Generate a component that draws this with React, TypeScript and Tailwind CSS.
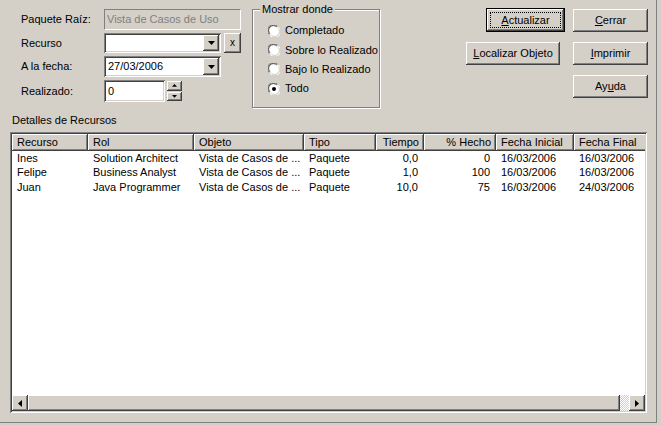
import React from 'react';

const sunken = 'shadow-[inset_1px_1px_#808080,inset_-1px_-1px_#ffffff,inset_2px_2px_#404040,inset_-2px_-2px_#d4d0c8]';
const raised = 'shadow-[inset_-1px_-1px_#404040,inset_1px_1px_#ffffff,inset_-2px_-2px_#808080,inset_2px_2px_#d4d0c8]';

function Tri({ dir, size = 7 }: { dir: 'down' | 'up' | 'left' | 'right'; size?: number }) {
  const pts: Record<string, string> = {
    down: '0,0 7,0 3.5,4',
    up: '0,4 7,4 3.5,0',
    left: '4,0 4,7 0,3.5',
    right: '0,0 0,7 4,3.5',
  };
  const vb = dir === 'down' || dir === 'up' ? '0 0 7 4' : '0 0 4 7';
  const w = dir === 'down' || dir === 'up' ? size : size * 4 / 7;
  const h = dir === 'down' || dir === 'up' ? size * 4 / 7 : size;
  return (
    <svg width={w} height={h} viewBox={vb}>
      <polygon points={pts[dir]} fill="#000" />
    </svg>
  );
}

function Radio({ checked, label }: { checked?: boolean; label: string }) {
  return (
    <div className="flex items-center h-[19.4px]">
      <svg width="12" height="12" viewBox="0 0 12 12" className="ml-[16px] mr-[5px]">
        <circle cx="6" cy="6" r="5.5" fill="#ffffff" />
        <path d="M1.2 9.5 A5.5 5.5 0 0 1 9.5 1.2" stroke="#808080" strokeWidth="1" fill="none" />
        <path d="M2 8.8 A4.5 4.5 0 0 1 8.8 2" stroke="#404040" strokeWidth="1" fill="none" />
        <path d="M10.8 2.5 A5.5 5.5 0 0 1 2.5 10.8" stroke="#ffffff" strokeWidth="1" fill="none" />
        <path d="M10 3.2 A4.5 4.5 0 0 1 3.2 10" stroke="#d4d0c8" strokeWidth="1" fill="none" />
        {checked && <circle cx="6" cy="6" r="2" fill="#000" />}
      </svg>
      <span>{label}</span>
    </div>
  );
}

function Btn({ children, w, isDefault }: { children: React.ReactNode; w: string; isDefault?: boolean }) {
  if (isDefault) {
    return (
      <div className={`${w} h-[24px] border border-black`}>
        <div className={`h-full w-full ${raised} flex items-center justify-center p-[3px]`}>
          <div className="h-full w-full border border-dotted border-black flex items-center justify-center">{children}</div>
        </div>
      </div>
    );
  }
  return <div className={`${w} h-[23px] ${raised} flex items-center justify-center`}>{children}</div>;
}

const cols = [
  { name: 'Recurso', w: 'w-[76px]', right: false },
  { name: 'Rol', w: 'w-[106px]', right: false },
  { name: 'Objeto', w: 'w-[110px]', right: false },
  { name: 'Tipo', w: 'w-[72px]', right: false },
  { name: 'Tiempo', w: 'w-[48px]', right: true },
  { name: '% Hecho', w: 'w-[72px]', right: true },
  { name: 'Fecha Inicial', w: 'w-[78px]', right: false },
  { name: 'Fecha Final', w: 'w-[80px]', right: false },
];

const rows = [
  ['Ines', 'Solution Architect', 'Vista de Casos de ...', 'Paquete', '0,0', '0', '16/03/2006', '16/03/2006'],
  ['Felipe', 'Business Analyst', 'Vista de Casos de ...', 'Paquete', '1,0', '100', '16/03/2006', '16/03/2006'],
  ['Juan', 'Java Programmer', 'Vista de Casos de ...', 'Paquete', '10,0', '75', '16/03/2006', '24/03/2006'],
];

export default function App() {
  return (
    <div className="w-[661px] h-[425px] bg-[#d4d0c8] overflow-hidden text-[11px] leading-none text-black font-['Liberation_Sans',Arial,sans-serif]">
      <div className="w-[657px] h-[423px] border-r border-b border-[#808080] flex flex-col">
        {/* top area */}
        <div className="flex pt-[9px] h-[112px]">
          {/* form */}
          <div className="pl-[21px] w-[252px] flex flex-col">
            <div className="flex items-center h-[21px]">
              <span className="w-[83px]">Paquete Raíz:</span>
              <div className="w-[137px] h-[21px] border border-[#808080] border-r-white border-b-white flex items-center px-[2px] text-[#808080]">
                Vista de Casos de Uso
              </div>
            </div>
            <div className="flex items-center h-[20px] mt-[3px]">
              <span className="w-[83px]">Recurso</span>
              <div className={`w-[117px] h-[20px] bg-white ${sunken} flex items-center justify-end p-[2px]`}>
                <div className={`w-[16px] h-full ${raised} bg-[#d4d0c8] flex items-center justify-center`}>
                  <Tri dir="down" />
                </div>
              </div>
              <div className={`ml-[3px] w-[17px] h-[20px] ${raised} flex items-center justify-center text-[10px]`}>x</div>
            </div>
            <div className="flex items-center h-[21px] mt-[3px]">
              <span className="w-[83px]">A la fecha:</span>
              <div className={`w-[117px] h-[21px] bg-white ${sunken} flex items-center p-[2px]`}>
                <span className="flex-1 pl-[2px]">27/03/2006</span>
                <div className={`w-[16px] h-full ${raised} bg-[#d4d0c8] flex items-center justify-center`}>
                  <Tri dir="down" />
                </div>
              </div>
            </div>
            <div className="flex items-center h-[22px] mt-[3px]">
              <span className="w-[83px]">Realizado:</span>
              <div className={`w-[61px] h-[22px] bg-white ${sunken} flex items-center pl-[4px]`}>0</div>
              <div className="ml-[2px] w-[15px] h-[22px] flex flex-col gap-[1px] py-[1px]">
                <div className={`flex-1 ${raised} flex items-center justify-center`}>
                  <Tri dir="up" size={5} />
                </div>
                <div className={`flex-1 ${raised} flex items-center justify-center`}>
                  <Tri dir="down" size={5} />
                </div>
              </div>
            </div>
          </div>

          {/* group box */}
          <div className="w-[128px] h-[107px] relative -mt-[8px]">
            <div className="absolute left-0 right-0 top-[8px] bottom-0 border border-[#808080] shadow-[1px_1px_#ffffff,inset_1px_1px_#ffffff]" />
            <span className="absolute left-[8px] top-[3px] bg-[#d4d0c8] px-[2px]">Mostrar donde</span>
            <div className="relative pt-[20px] flex flex-col">
              <Radio label="Completado" />
              <Radio label="Sobre lo Realizado" />
              <Radio label="Bajo lo Realizado" />
              <Radio label="Todo" checked />
            </div>
          </div>

          {/* buttons */}
          <div className="ml-[86px] flex flex-col">
            <div className="flex justify-end items-start gap-[8px] -mt-[1px]">
              <Btn w="w-[79px]" isDefault><span><u>A</u>ctualizar</span></Btn>
              <div className="mt-[1px]"><Btn w="w-[75px]"><span><u>C</u>errar</span></Btn></div>
            </div>
            <div className="flex justify-end gap-[13px] mt-[10px]">
              <Btn w="w-[94px]"><span><u>L</u>ocalizar Objeto</span></Btn>
              <Btn w="w-[75px]"><span><u>I</u>mprimir</span></Btn>
            </div>
            <div className="flex justify-end mt-[10px]">
              <Btn w="w-[75px]"><span>Ay<u>u</u>da</span></Btn>
            </div>
          </div>
        </div>

        {/* details */}
        <div className="pl-[12px] h-[12px] mt-[2px] flex items-center">Detalles de Recursos</div>
        <div className={`mx-[10px] mt-[6px] h-[281px] w-[637px] bg-white ${sunken} p-[2px] flex flex-col`}>
          <div className="flex h-[17px] overflow-hidden">
            {cols.map((c) => (
              <div
                key={c.name}
                className={`${c.w} shrink-0 h-full ${raised} bg-[#d4d0c8] flex items-center px-[5px] ${c.right ? 'justify-end' : ''}`}
              >
                {c.name}
              </div>
            ))}
          </div>
          <div className="flex-1 pt-[0px] overflow-hidden">
            {rows.map((r, i) => (
              <div key={i} className="flex h-[14.5px] items-center">
                {r.map((v, j) => (
                  <div
                    key={j}
                    className={`${cols[j].w} shrink-0 px-[5px] whitespace-nowrap overflow-hidden ${cols[j].right ? 'text-right pr-[6px]' : ''}`}
                  >
                    {v}
                  </div>
                ))}
              </div>
            ))}
          </div>
          {/* horizontal scrollbar */}
          <div className="h-[16px] flex bg-[#d4d0c8]">
            <div className={`w-[16px] h-full ${raised} flex items-center justify-center`}>
              <Tri dir="left" />
            </div>
            <div className={`flex-1 h-full ${raised}`} />
            <div className="w-[9px] h-full bg-[repeating-conic-gradient(#ffffff_0_25%,#d4d0c8_0_50%)] bg-[length:2px_2px]" />
            <div className={`w-[16px] h-full ${raised} flex items-center justify-center`}>
              <Tri dir="right" />
            </div>
          </div>
        </div>
      </div>
    </div>
  );
}
